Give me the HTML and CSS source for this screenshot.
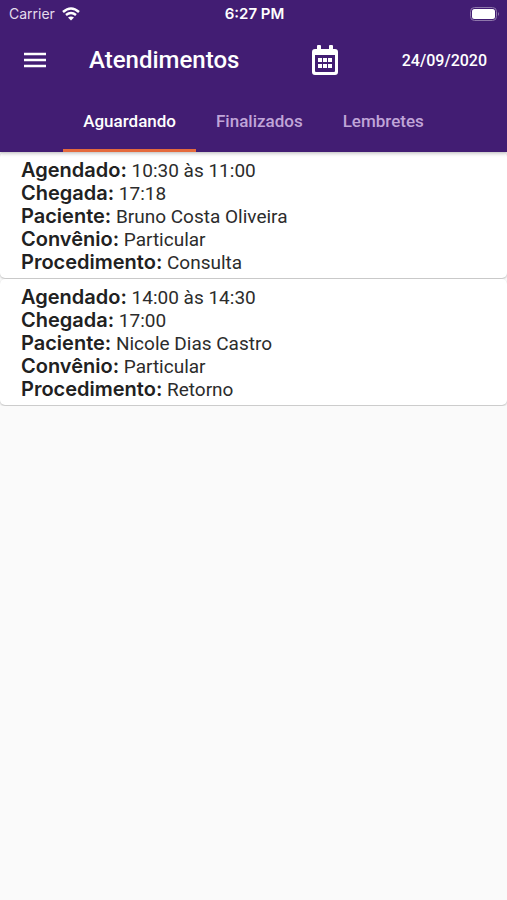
FILE: index.html
```html
<!DOCTYPE html>
<html lang="pt-BR">
<head>
    <meta charset="UTF-8">
    <meta name="viewport" content="width=device-width, initial-scale=1.0">
    <title>Atendimentos</title>
    <link rel="stylesheet" href="styles.css">
</head>
<body>

<header class="header">
    <!-- Status bar -->
    <div class="status-bar">
        <div class="carrier">
            <span>Carrier</span>
            <svg class="wifi" viewBox="0 0 18 14" aria-hidden="true">
                <path d="M1 5Q9 -2 17 5" />
                <path d="M4 8Q9 4 14 8" />
                <path class="dot" d="M6 10.500Q9 8.500 12 10.500L9 13.500Z" />
            </svg>
        </div>
        <span class="clock">6:27 PM</span>
        <div class="battery-box">
            <svg class="battery" viewBox="0 0 30 14" aria-hidden="true">
                <rect class="shell" x="0.500" y="0.500" width="26" height="13" rx="4" />
                <rect class="charge" x="2" y="2" width="23" height="10" rx="2.500" />
                <path class="tip" d="M28 5Q30 7 28 9Z" />
            </svg>
        </div>
    </div>

    <!-- Title bar -->
    <div class="toolbar">
        <button class="icon-button" type="button" aria-label="Menu">
            <svg class="menu-icon" viewBox="0 0 24 16" aria-hidden="true">
                <path d="M1 2H23M1 8H23M1 14H23" />
            </svg>
        </button>
        <h1>Atendimentos</h1>
        <button class="icon-button calendar-button" type="button" aria-label="Escolher data">
            <svg class="calendar-icon" viewBox="0 0 28 30" aria-hidden="true">
                <path fill-rule="evenodd" d="M6 1Q6 0 7 0H9Q10 0 10 1V4H18V1Q18 0 19 0H21Q22 0 22 1V4H24Q27 4 27 7V27Q27 30 24 30H4Q1 30 1 27V7Q1 4 4 4H6ZM4 10V26Q4 27 5 27H23Q24 27 24 26V10Z" />
                <path d="M7 13H11V17H7ZM12 13H16V17H12ZM17 13H21V17H17ZM7 19H11V23H7ZM12 19H16V23H12ZM17 19H21V23H17Z" />
            </svg>
        </button>
        <span class="date">24/09/2020</span>
    </div>

    <nav class="tabs">
        <a class="tab active" href="#aguardando">Aguardando</a>
        <a class="tab" href="#finalizados">Finalizados</a>
        <a class="tab" href="#lembretes">Lembretes</a>
    </nav>
</header>

<main id="aguardando">
    <article class="card">
        <p><strong>Agendado:</strong> 10:30 às 11:00</p>
        <p><strong>Chegada:</strong> 17:18</p>
        <p><strong>Paciente:</strong> Bruno Costa Oliveira</p>
        <p><strong>Convênio:</strong> Particular</p>
        <p><strong>Procedimento:</strong> Consulta</p>
    </article>
    <article class="card">
        <p><strong>Agendado:</strong> 14:00 às 14:30</p>
        <p><strong>Chegada:</strong> 17:00</p>
        <p><strong>Paciente:</strong> Nicole Dias Castro</p>
        <p><strong>Convênio:</strong> Particular</p>
        <p><strong>Procedimento:</strong> Retorno</p>
    </article>
</main>

</body>
</html>
```
FILE: styles.css
```css
* {
    box-sizing: border-box;
}
body {
    font-family: Roboto, sans-serif;
    background-color: #fafafa;
    margin: 0;
    color: #2c2c2c;
}
.header {
    position: relative;
    background-color: #421d73;
    color: #fff;
    box-shadow: 0 1px 4px rgba(0, 0, 0, 0.3);
}

/* Status bar */
.status-bar {
    display: grid;
    grid-template-columns: 1fr auto 1fr;
    align-items: center;
    height: 27px;
    padding: 0 7px 0 9px;
    font-family: Inter, sans-serif;
    font-size: 14px;
}
.carrier {
    display: flex;
    align-items: center;
    gap: 7px;
    color: #e4dcec;
}
.wifi {
    width: 18px;
    height: 14px;
    fill: none;
    stroke: #fff;
    stroke-width: 2.5;
}
.wifi .dot {
    fill: #fff;
    stroke: none;
}
.clock {
    font-size: 15px;
    font-weight: 600;
}
.battery-box {
    display: flex;
    justify-content: flex-end;
}
.battery {
    width: 30px;
    height: 14px;
    fill: #fff;
}
.battery .shell {
    fill: none;
    stroke: #8e77ab;
}
.battery .tip {
    fill: #8e77ab;
}

/* Title bar */
.toolbar {
    display: flex;
    align-items: center;
    height: 66px;
    padding: 0 20px 0 23px;
}
.icon-button {
    display: flex;
    padding: 0;
    border: none;
    background: none;
    color: inherit;
    cursor: pointer;
}
.menu-icon {
    width: 24px;
    height: 16px;
    stroke: currentColor;
    stroke-width: 2.5;
}
.calendar-icon {
    width: 28px;
    height: 30px;
    fill: currentColor;
}
h1 {
    margin: 0 0 0 42px;
    font-size: 24px;
    font-weight: 500;
}
.calendar-button {
    margin-left: 72px;
}
.date {
    margin-left: auto;
    font-size: 16px;
    font-weight: 500;
}

/* Tabs */
.tabs {
    display: flex;
    justify-content: center;
    height: 59px;
}
.tab {
    display: flex;
    align-items: center;
    padding: 0 20px;
    border-bottom: 3px solid transparent;
    color: #c0a5d8;
    font-size: 17px;
    font-weight: 500;
    text-decoration: none;
}
.tab.active {
    border-bottom-color: #e56a3c;
    color: #fff;
}

/* Appointment cards */
.card {
    margin-bottom: 1px;
    padding: 7px 21px 4px;
    border-radius: 5px;
    background-color: #fff;
    box-shadow: 0 1px 2px rgba(0, 0, 0, 0.25);
}
.card p {
    margin: 0;
    font-size: 19px;
    line-height: 23px;
}
.card strong {
    font-family: Inter, sans-serif;
    font-size: 20px;
    font-weight: 600;
    color: #212121;
}
```
